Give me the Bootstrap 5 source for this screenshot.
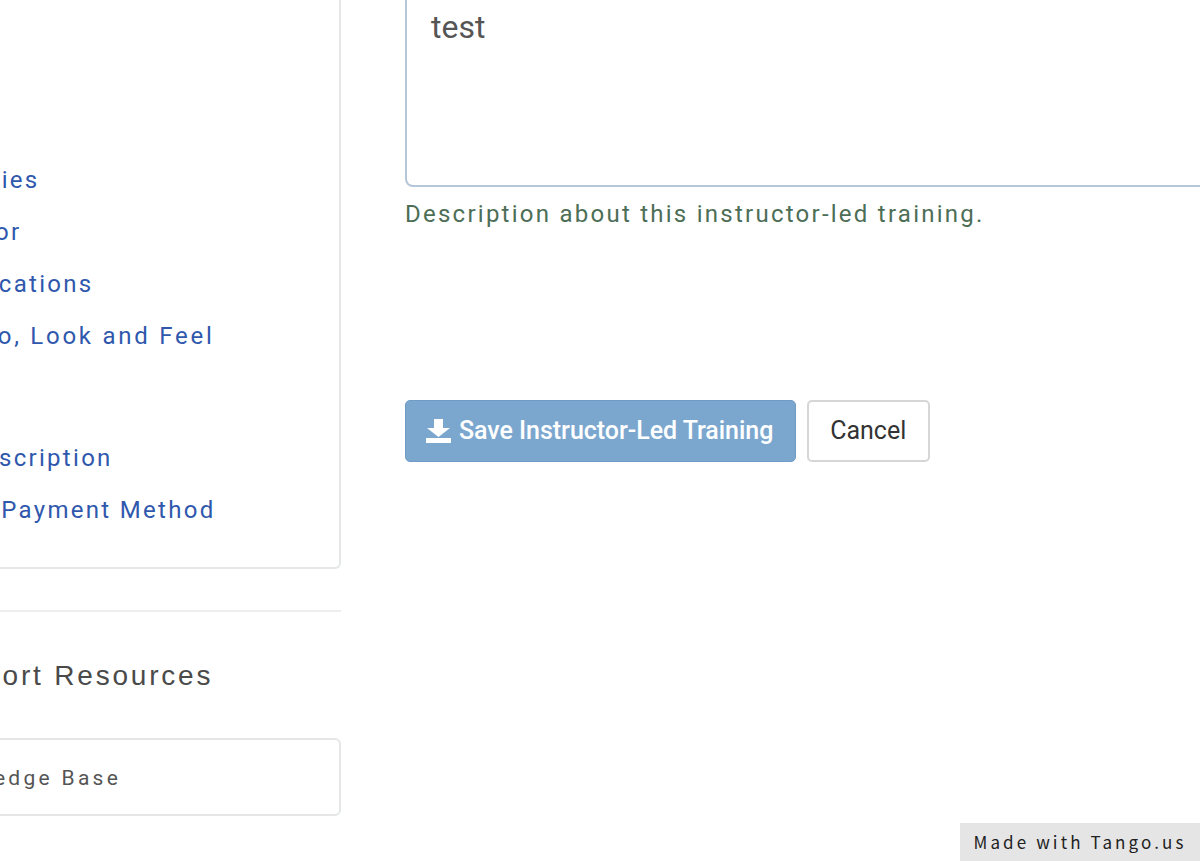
<!DOCTYPE html>
<html lang="en">
<head>
<meta charset="utf-8">
<title>Instructor-Led Training</title>
<link rel="stylesheet" href="https://cdn.jsdelivr.net/npm/bootstrap@5.3.0/dist/css/bootstrap.min.css">
<style>
html,body{height:861px;overflow:hidden;background:#fff}
body{font-family:"Roboto","Liberation Sans",sans-serif;position:relative}
.stage{width:1400px;gap:64px;margin-left:-100px}
.side{width:441px;flex:none;height:861px}
.menu-box{height:569px;border:2px solid #e4e6e8;border-top:0;border-radius:0 0 6px 6px;padding-top:154px;padding-left:3px}
.menu-link{display:block;height:52px;line-height:52px;font-size:24px;letter-spacing:2.3px;color:#2f58ad;text-decoration:none;white-space:nowrap}
.nudge-2{margin-left:-2px}
.nudge-4{margin-left:-4px}
.nudge-9{margin-left:-10px}
.nudge-11{margin-left:-12px}
.nudge-25{margin-left:-26px}
.row-wide{letter-spacing:2.75px;margin-left:-16px}
.gap-after{margin-bottom:70px}
.rule{margin:41px 0 0;border:0;border-top:2px solid #eeeeee;opacity:1}
.res-title{font-family:"Liberation Sans",sans-serif;font-size:28px;line-height:32px;letter-spacing:2.8px;color:#4a4a4a;margin:48px 0 0 26px;font-weight:400;white-space:nowrap}
.res-box{height:78px;margin-top:46px;border:2px solid #e4e6e8;border-radius:6px;padding-left:18px;line-height:76px;font-size:21px;letter-spacing:3.3px;color:#555;white-space:nowrap}
.main-col{width:900px;flex:none}
.desc-area{height:187px;border:2px solid #b4c6da;border-top:0;border-radius:0 0 8px 8px;padding:7px 24px;font-size:32px;line-height:40px;color:#555}
.help-line{font-size:24px;line-height:28px;letter-spacing:2.25px;color:#4d6e56;margin-top:13px}
.actions{margin-top:172px;gap:11px}
.save-btn{background:#7ba7cf;border:1px solid #6f9cc6;border-radius:5px;color:#fff;height:62px;width:391px;font-size:25px;font-weight:500;padding:0 0 0 20px;display:flex;align-items:center;justify-content:flex-start;gap:8px;letter-spacing:-.04px}
.save-btn:hover{background:#7ba7cf;color:#fff}
.cancel-btn{background:#fff;border:2px solid #d6d6d6;border-radius:5px;color:#333;height:62px;width:122.500px;font-size:25px;padding:0}
.tango{position:absolute;right:0;bottom:0;width:240px;height:38px;background:#e5e5e5;color:#222;font-family:"Noto Sans CJK JP","Noto Sans",sans-serif;font-size:17px;letter-spacing:3.1px;line-height:38px;text-align:center}
</style>
</head>
<body>
<div class="stage d-flex">
  <aside class="side">
    <div class="menu-box">
      <a class="menu-link nudge-4" href="#">Categories</a>
      <a class="menu-link nudge-9" href="#">Instructor</a>
      <a class="menu-link nudge-25" href="#">Communications</a>
      <a class="menu-link row-wide gap-after" href="#">Site Logo, Look and Feel</a>
      <a class="menu-link nudge-11" href="#">Edit Subscription</a>
      <a class="menu-link nudge-2" href="#">Update Payment Method</a>
    </div>
    <hr class="rule">
    <h2 class="res-title">Support Resources</h2>
    <div class="res-box">Knowledge Base</div>
  </aside>
  <main class="main-col">
    <div class="desc-area">test</div>
    <div class="help-line">Description about this instructor-led training.</div>
    <div class="actions d-flex">
      <button class="btn save-btn" type="button">
        <svg width="25" height="24" viewBox="0 0 25 24" fill="#fff"><path d="M8 0h9v9h7L12.500 18 1 9h7zM0 19h25v5H0z"/></svg>
        <span>Save Instructor-Led Training</span>
      </button>
      <button class="btn cancel-btn" type="button">Cancel</button>
    </div>
  </main>
</div>
<div class="tango">Made with Tango.us</div>
<script src="https://cdn.jsdelivr.net/npm/bootstrap@5.3.0/dist/js/bootstrap.bundle.min.js"></script>
</body>
</html>
